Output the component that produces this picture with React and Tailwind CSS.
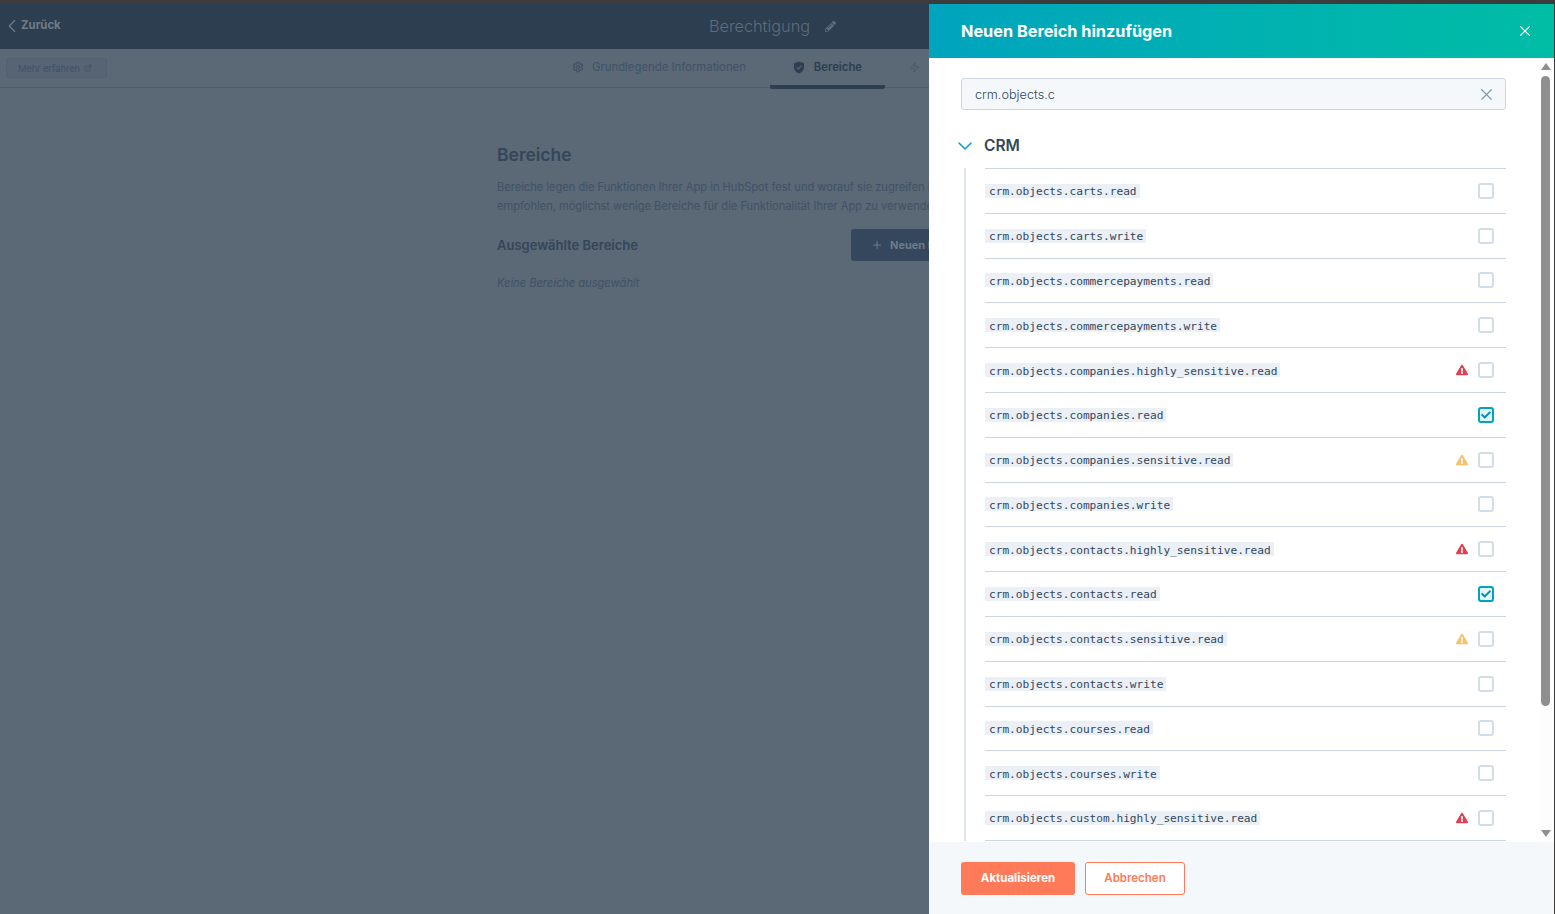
import { ChevronLeft, ChevronDown, ExternalLink, Plus, Settings, X, Zap } from "lucide-react";
import { FaPencilAlt, FaExclamationTriangle, FaCheck } from "react-icons/fa";

const sans = "font-['Inter','Noto_Sans',sans-serif]";

const scopes = [
  { name: "crm.objects.carts.read" },
  { name: "crm.objects.carts.write" },
  { name: "crm.objects.commercepayments.read" },
  { name: "crm.objects.commercepayments.write" },
  { name: "crm.objects.companies.highly_sensitive.read", level: "high" },
  { name: "crm.objects.companies.read", checked: true },
  { name: "crm.objects.companies.sensitive.read", level: "medium" },
  { name: "crm.objects.companies.write" },
  { name: "crm.objects.contacts.highly_sensitive.read", level: "high" },
  { name: "crm.objects.contacts.read", checked: true },
  { name: "crm.objects.contacts.sensitive.read", level: "medium" },
  { name: "crm.objects.contacts.write" },
  { name: "crm.objects.courses.read" },
  { name: "crm.objects.courses.write" },
  { name: "crm.objects.custom.highly_sensitive.read", level: "high" },
];

function ShieldIcon() {
  return (
    <svg width="12" height="13" viewBox="0 0 12 13" className="text-[#2d3e50]">
      <path
        fill="currentColor"
        d="M6 .5 11 2.2v4c0 3-2.1 5.2-5 6.3-2.9-1.1-5-3.3-5-6.3v-4L6 .5Z"
      />
      <path d="M3.7 6.3 5.4 8l3-3.2" fill="none" stroke="#5b6875" strokeWidth="1.2" />
    </svg>
  );
}

function ScopeRow({ name, level, checked }) {
  return (
    <div className="h-[44.8px] flex items-center justify-between border-b border-[#cbd6e2]">
      <code className="bg-[#eaf0f6] pl-1 pr-[3px] pt-[2px] h-[14px] leading-none flex items-center font-['DejaVu_Sans_Mono',monospace] text-[11.15px] text-[#33475b]">
        {name}
      </code>
      <div className="flex items-center">
        {level === "high" && <FaExclamationTriangle className="text-[#e0404f] text-[12px] mr-[10px]" />}
        {level === "medium" && <FaExclamationTriangle className="text-[#f5c26b] text-[12px] mr-[10px]" />}
        {checked ? (
          <div className="w-4 h-4 mr-3 rounded-[3px] border-2 border-[#00a4bd] bg-[#e5f5f8] flex items-center justify-center">
            <FaCheck className="text-[#0091ae] text-[10px]" />
          </div>
        ) : (
          <div className="w-4 h-4 mr-3 rounded-[3px] border-2 border-[#d3dde8] bg-white" />
        )}
      </div>
    </div>
  );
}

function Background() {
  return (
    <div className="h-full bg-[#5b6875] overflow-hidden">
      {/* HEADER */}
      <header className="h-[45px] bg-[#2d3e50] relative flex items-center justify-center">
        <div className="absolute left-[1px] top-0 h-full flex items-center pb-[2px] text-[#6f7c89]">
          <ChevronLeft size={22} strokeWidth={1.3} />
          <span className="text-[11.4px] font-bold -ml-[2px]">Zurück</span>
        </div>
        <div className="flex items-center ml-[-9px] text-[#5f6d7c]">
          <span className="text-[16.3px] font-light">Berechtigung</span>
          <FaPencilAlt className="ml-[15px] text-[11px]" />
        </div>
      </header>

      {/* TABS */}
      <div className="h-[39px] flex border-b border-[#4f5c6b] pl-[6px]">
        <div className="mt-[9px] h-[20px] w-[101px] rounded-[3px] border border-[#52606f] bg-[#566473] flex items-center pl-[11px] gap-[4px] text-[#3f5268]">
          <span className="text-[9.2px] pt-[1px]">Mehr erfahren</span>
          <ExternalLink size={8} />
        </div>
        <div className="ml-[465px] flex items-center h-[38px] text-[#3f5268]">
          <div className="flex items-center gap-[8px] mb-[1px]">
            <Settings size={12} strokeWidth={2.5} />
            <span className="text-[11.35px]">Grundlegende Informationen</span>
          </div>
          <div className="ml-[24px] w-[115px] h-[40px] mt-[2px] flex items-center justify-center gap-[9px] border-b-4 border-[#2d3e50] rounded-b-[2px] text-[#2d3e50]">
            <ShieldIcon />
            <span className="text-[11.3px] font-semibold">Bereiche</span>
          </div>
          <Zap size={11} className="ml-[24px] mb-[1px] text-[#4a5a6b]" />
        </div>
      </div>

      {/* CONTENT */}
      <main className="pl-[497px] pt-[56px] text-[#3f5268]">
        <div className="w-[432px] overflow-hidden">
          <h2 className="text-[17.5px] leading-[22px] font-semibold text-[#34465a]">Bereiche</h2>
          <p className="mt-[12px] text-[11.1px] leading-[19px] whitespace-nowrap">
            Bereiche legen die Funktionen Ihrer App in HubSpot fest und worauf sie zugreifen kann. Es wird
            <br />
            empfohlen, möglichst wenige Bereiche für die Funktionalität Ihrer App zu verwenden.
          </p>
          <div className="mt-[13px] flex items-center">
            <h3 className="text-[13px] pt-[2px] font-semibold text-[#34465a] w-[354px] shrink-0">Ausgewählte Bereiche</h3>
            <div className="h-[32px] w-[160px] bg-[#34475c] rounded-[3px] flex items-center pl-5 gap-[7px] text-[#6d7b8a] shrink-0">
              <Plus size={12} />
              <span className="text-[11px] font-bold">Neuen Bereich</span>
            </div>
          </div>
          <p className="mt-[14px] text-[11.1px] italic">Keine Bereiche ausgewählt</p>
        </div>
      </main>
    </div>
  );
}

function Panel() {
  return (
    <aside className="absolute right-0 top-0 bottom-0 w-[625px] bg-white flex flex-col">
      <div className="h-[54px] shrink-0 bg-gradient-to-r from-[#00a4bd] to-[#00bda5] flex items-center justify-between pl-8 pr-[20px]">
        <h1 className="text-[16.3px] font-bold text-white">Neuen Bereich hinzufügen</h1>
        <X size={18} strokeWidth={1.5} className="text-white" />
      </div>

      <div className="flex-1 min-h-0 flex">
        <div className="flex-1 min-w-0 overflow-hidden pl-8 pr-[34px] pt-5">
          <div className="h-8 bg-[#f5f8fa] border border-[#cbd6e2] rounded-[3px] flex items-center justify-between pl-[13px] pr-[9px]">
            <span className="text-[12.7px] pt-[1px] font-light text-[#33475b]">crm.objects.c</span>
            <X size={19} strokeWidth={1.4} className="text-[#7c98b6]" />
          </div>

          <div className="mt-[23px] h-[25px] flex items-center">
            <ChevronDown size={24} strokeWidth={1.5} className="text-[#00a4bd] -ml-[8px]" />
            <h2 className="ml-[7px] text-[15.5px] font-semibold text-[#33475b]">CRM</h2>
          </div>

          <div className="mt-[10px] ml-[3px] pl-[19px] border-l-2 border-[#dfe3eb]">
            <div className="border-t border-[#cbd6e2]">
              {scopes.map((scope) => (
                <ScopeRow key={scope.name} {...scope} />
              ))}
            </div>
          </div>
        </div>

        {/* SCROLLBAR */}
        <div className="w-[14px] bg-[#fdfdfd] flex flex-col items-center pl-[1px] pr-[4px]">
          <div className="mt-[5px] w-0 h-0 border-x-[5px] border-x-transparent border-b-[7px] border-b-[#8f8f8f]" />
          <div className="mt-[6px] h-[630px] w-[9px] rounded-full bg-[#8f8f8f]" />
          <div className="mt-auto mb-[5px] w-0 h-0 border-x-[5px] border-x-transparent border-t-[7px] border-t-[#8f8f8f]" />
        </div>
      </div>

      <div className="h-[72px] shrink-0 bg-[#f5f8fa] flex items-center gap-[10px] pl-8 pt-[1px]">
        <button className="w-[114px] h-[33px] rounded-[3px] bg-[#ff7a59] text-white text-[11.5px] font-bold">
          Aktualisieren
        </button>
        <button className="w-[100px] h-[33px] rounded-[3px] bg-white border border-[#ff7a59] text-[#ff7a59] text-[11.5px] font-semibold">
          Abbrechen
        </button>
      </div>
    </aside>
  );
}

export default function App() {
  return (
    <div className={`h-screen flex flex-col bg-[#3c3c3c] overflow-hidden ${sans}`}>
      <div className="h-1 shrink-0 bg-[#3c3c3c]" />
      <div className="flex-1 min-h-0 flex">
        <div className="relative flex-1 min-w-0">
          <Background />
          <Panel />
        </div>
        <div className="w-px shrink-0 bg-[#3c3c3c]" />
      </div>
    </div>
  );
}
